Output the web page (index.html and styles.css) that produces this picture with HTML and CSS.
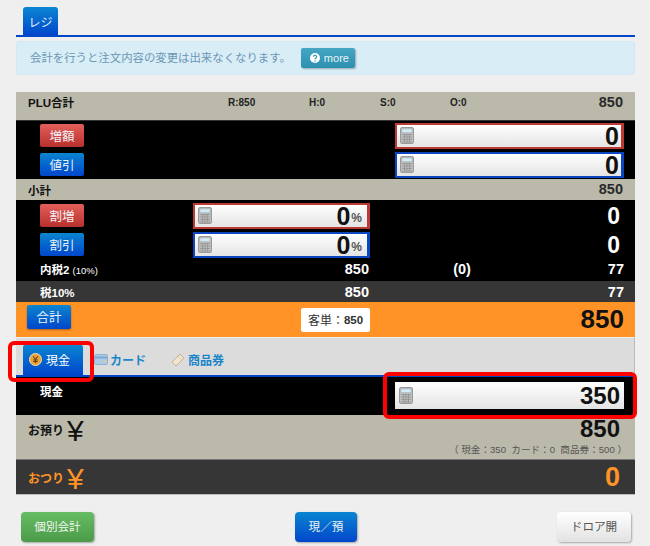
FILE: index.html
```html
<!DOCTYPE html>
<html lang="ja">
<head>
<meta charset="utf-8">
<title>レジ</title>
<link rel="stylesheet" href="styles.css">
</head>
<body>
<svg class="defs" width="0" height="0" aria-hidden="true">
  <symbol id="calc" viewBox="0 0 14 17">
    <rect x="0.5" y="0.5" width="13" height="16" rx="1.5" fill="#bdbdbd" stroke="#9a9a9a"/>
    <rect x="2" y="2" width="10" height="3.5" fill="#d4ecf5" stroke="#9fb4bc" stroke-width="0.5"/>
    <path d="M2 7.5h10M2 10h10M2 12.5h10M2 15h10M4.500 7v8.500M7 7v8.500M9.500 7v8.500" stroke="#8f8f8f" stroke-width="0.7" fill="none"/>
  </symbol>
</svg>
<main class="page">
  <nav class="top-tabs"><span class="top-tab">レジ</span></nav>
  <div class="alert">
    <span class="alert-text">会計を行うと注文内容の変更は出来なくなります。</span>
    <span class="more">
      <svg class="more-icon" viewBox="0 0 10 10" aria-hidden="true"><circle cx="5" cy="5" r="5" fill="#fff"/><path d="M3.400 3.800a1.600 1.600 0 1 1 2.400 1.400c-.5.3-.8.5-.8 1.100" stroke="#2f94b5" stroke-width="1.200" fill="none"/><circle cx="5" cy="8" r=".7" fill="#2f94b5"/></svg>
      more
    </span>
  </div>

  <section class="register">
    <div class="row khaki plu">
      <b class="plu-title">PLU合計</b>
      <span class="stat stat-r">R:850</span>
      <span class="stat stat-h">H:0</span>
      <span class="stat stat-s">S:0</span>
      <span class="stat stat-o">O:0</span>
      <b class="amount-sm">850</b>
    </div>

    <div class="black adj-top">
      <div class="row adj-row">
        <span class="btn-sm red">増額</span>
        <div class="field wide border-red"><svg class="calc"><use href="#calc"/></svg><b>0</b></div>
      </div>
      <div class="row adj-row">
        <span class="btn-sm blue">値引</span>
        <div class="field wide border-blue"><svg class="calc"><use href="#calc"/></svg><b>0</b></div>
      </div>
    </div>

    <div class="row khaki subtotal">
      <b class="sub-title">小計</b>
      <b class="amount-sm">850</b>
    </div>

    <div class="black adj-mid">
      <div class="row rate-row">
        <span class="btn-sm red">割増</span>
        <div class="field narrow border-red"><svg class="calc"><use href="#calc"/></svg><b>0</b><i>%</i></div>
        <b class="white-zero">0</b>
      </div>
      <div class="row rate-row">
        <span class="btn-sm blue">割引</span>
        <div class="field narrow border-blue"><svg class="calc"><use href="#calc"/></svg><b>0</b><i>%</i></div>
        <b class="white-zero">0</b>
      </div>
      <div class="row tax-row">
        <b class="tax-label">内税2 <small>(10%)</small></b>
        <b class="tax-a">850</b>
        <b class="tax-b">(0)</b>
        <b class="tax-c">77</b>
      </div>
    </div>

    <div class="row tax-row dark tax-dark">
      <b class="tax-label">税10%</b>
      <b class="tax-a">850</b>
      <b class="tax-b"></b>
      <b class="tax-c">77</b>
    </div>

    <div class="row total">
      <span class="btn-sm blue raised">合計</span>
      <span class="per">客単：<b>850</b></span>
      <b class="total-amount">850</b>
    </div>

    <div class="pay-tabs">
      <span class="pay-tab active">
        <svg class="coin" viewBox="0 0 14 14" aria-hidden="true"><circle cx="7" cy="7" r="6.500" fill="#e8a33c" stroke="#fbe3b8"/><path d="M4.500 3.500 7 7l2.500-3.500M7 7v4M4.600 7.600h4.800M4.600 9.200h4.800" stroke="#6b4210" stroke-width="1.100" fill="none"/></svg>
        現金
      </span>
      <span class="pay-tab">
        <svg class="tab-icon" viewBox="0 0 14 11" aria-hidden="true"><rect x=".5" y=".5" width="13" height="10" rx="1" fill="#a9cbe8" stroke="#8fb2d2"/><rect x="1" y="2.500" width="12" height="2" fill="#7ea6cc"/><rect x="9" y="6.500" width="3" height="2" fill="#e8c98a"/></svg>
        カード
      </span>
      <span class="pay-tab">
        <svg class="tab-icon ticket" viewBox="0 0 14 14" aria-hidden="true"><path d="M1 9 9 1l4 4-8 8z" fill="#f0e4cd" stroke="#c4b496"/><path d="M7.500 3.500 10.500 6.500" stroke="#c4b496" stroke-dasharray="1 1"/></svg>
        商品券
      </span>
    </div>

    <div class="row black cash">
      <b class="cash-label">現金</b>
      <div class="field wide plain"><svg class="calc"><use href="#calc"/></svg><b>350</b></div>
    </div>

    <div class="khaki deposit">
      <div class="row deposit-main">
        <b class="word">お預り</b>
        <span class="yen">¥</span>
        <b class="big">850</b>
      </div>
      <p class="breakdown">（ 現金：350&nbsp; カード：0&nbsp; 商品券：500 ）</p>
    </div>

    <div class="row dark change">
      <b class="word">おつり</b>
      <span class="yen">¥</span>
      <b class="big">0</b>
    </div>
  </section>

  <footer class="actions">
    <span class="btn green">個別会計</span>
    <span class="btn blue mid">現／預</span>
    <span class="btn light">ドロア開</span>
  </footer>

  <div class="mark mark-tab"></div>
  <div class="mark mark-field"></div>
</main>
</body>
</html>
```
FILE: styles.css
```css
* { box-sizing: border-box; }
html, body { margin: 0; padding: 0; }
body {
  width: 650px;
  height: 546px;
  overflow: hidden;
  background: #efefef;
  font-family: "Liberation Sans", "Noto Sans CJK JP", sans-serif;
  color: #111;
}
.defs { position: absolute; }
.page { position: relative; height: 546px; padding: 7px 15px 0 16px; }

.top-tabs { height: 30px; border-bottom: 2px solid #0046c8; padding-left: 7px; }
.top-tab {
  display: flex; align-items: center; justify-content: center;
  width: 35px; height: 28px;
  border-radius: 3px 3px 0 0;
  background: linear-gradient(#0b86d2, #0046cc);
  color: #e8f3fb; font-size: 12px;
}

.alert {
  display: flex; align-items: center;
  height: 34px; margin-top: 4px; padding-left: 13px;
  background: #d9edf7; border: 1px solid #d2e8f3; border-radius: 3px;
  color: #6b97b5; font-size: 11.400px;
}
.alert-text { margin-bottom: 3px; }
.more {
  display: flex; align-items: center; gap: 4px;
  width: 54px; height: 20px; margin-left: 10px; padding-left: 9px;
  background: linear-gradient(#46a6c4, #2f8fb0);
  border-radius: 2px; box-shadow: 1px 1px 2px rgba(0,0,0,.3);
  color: #e8f4f8; font-size: 11px;
}
.more-icon { width: 10px; height: 10px; }

.register { margin-top: 17px; box-shadow: -1px 0 0 #b9b9ad inset; }
.row { display: flex; align-items: center; position: relative; }
.khaki { background: #bab9aa; }
.black { background: #000; color: #fff; }
.dark { background: #363636; color: #fff; }

.plu { height: 28px; align-items: flex-start; padding-top: 2px; }
.plu-title { margin-left: 12px; width: 200px; font-size: 11.500px; line-height: 18px; }
.stat { font-size: 10px; font-weight: bold; line-height: 17px; color: #222; }
.stat-r { width: 81px; }
.stat-h { width: 71px; }
.stat-s { width: 70px; }
.stat-o { width: 30px; }
.amount-sm { margin-left: auto; margin-right: 12px; font-size: 14.500px; line-height: 17px; color: #2a2a2a; }

.adj-top { height: 59px; border-top: 1px solid #333; }
.adj-row { height: 29px; justify-content: space-between; padding: 0 11px 0 24px; }

.btn-sm {
  display: flex; align-items: center; justify-content: center;
  width: 44px; height: 23px; padding-bottom: 1px; border-radius: 2px;
  color: #eef3f8; font-size: 12.500px;
}
.red { background: linear-gradient(#e2605b, #b8302c); }
.blue { background: linear-gradient(#0b85d0, #0046cc); }

.field {
  display: flex; align-items: center; justify-content: flex-end;
  height: 26px; padding: 0 2px 0 3px;
  background: linear-gradient(#fff, #e4e4e4);
  color: #111;
}
.field b { font-size: 25px; line-height: 22px; }
.field i { font-style: normal; font-weight: bold; font-size: 12px; color: #555; margin: 4px 3px 0 1px; }
.wide { width: 229px; }
.narrow { width: 177px; }
.border-red { border: 3px solid #bd3a34; border-width: 2px 3px 2px 2px; }
.border-blue { border: 3px solid #0b46c2; border-width: 2px 3px 2px 2px; }
.calc { width: 14px; height: 17px; margin-right: auto; }

.subtotal { height: 21px; }
.sub-title { margin-left: 12px; font-size: 11.500px; }

.adj-mid { height: 81px; padding-top: 1px; }
.rate-row { height: 29px; padding: 0 15px 0 24px; }
.rate-row .field { margin-left: 109px; }
.white-zero { margin-left: auto; font-size: 23px; line-height: 22px; }
.tax-row { height: 21px; padding: 0 11px 0 24px; }
.adj-mid .tax-row { height: 20px; }
.tax-label { width: 153px; font-size: 11.500px; }
.tax-label small { font-size: 9.500px; font-weight: normal; }
.tax-a { width: 176px; text-align: right; font-size: 14.500px; }
.tax-b { width: 186px; text-align: center; font-size: 14.500px; }
.tax-c { margin-left: auto; font-size: 14.500px; }
.tax-dark { height: 21px; }

.total { height: 35px; background: #ff9326; padding: 0 11px; }
.raised { align-self: flex-start; margin-top: 3px; height: 24px; box-shadow: 0 1px 2px rgba(0,0,0,.35); }
.per {
  display: flex; align-items: center; justify-content: center;
  width: 69px; height: 24px; margin-left: 230px;
  background: #fff; border-radius: 2px;
  font-size: 12px; color: #333;
}
.per b { font-size: 11.500px; }
.total-amount { margin-left: auto; font-size: 26px; color: #111; }

.pay-tabs {
  display: flex; align-items: flex-end;
  height: 40px; padding-left: 7px;
  background: #dcdcdc;
  border-top: 1px solid #efefef;
  border-right: 1px solid #bbb;
  border-bottom: 2px solid #0046c8;
}
.pay-tab {
  display: flex; align-items: center;
  height: 30px; padding-bottom: 1px;
  color: #1c86c8; font-size: 12px; font-weight: bold;
}
.pay-tab:nth-child(2) { width: 77px; margin-left: 11px; gap: 2px; }
.pay-tab:nth-child(3) { gap: 3px; }
.pay-tab.active {
  width: 60px; gap: 4px; padding-left: 6px;
  border-radius: 2px 2px 0 0;
  background: linear-gradient(#0b85d0, #0046cc);
  color: #fff; font-weight: normal;
}
.coin { width: 13px; height: 13px; }
.tab-icon { width: 14px; height: 11px; }
.tab-icon.ticket { width: 14px; height: 14px; }

.cash { height: 38px; align-items: flex-start; padding-right: 11px; }
.cash-label { margin: 7px 0 0 24px; font-size: 11.500px; line-height: 16px; }
.cash .field { margin: 5px 0 0 auto; height: 27px; padding: 0 4px; }
.cash .field b { font-size: 24px; }

.deposit { height: 45px; border-bottom: 1px solid #777; }
.deposit-main { height: 31px; padding: 0 15px 0 12px; }
.word { font-size: 12px; width: 39px; line-height: 16px; }
.yen { font-size: 30px; line-height: 24px; font-weight: normal; }
.big { margin-left: auto; margin-top: -3px; font-size: 24px; line-height: 24px; }
.deposit-main .big { color: #111; }
.breakdown { margin: -3px 0 0; padding-right: 8px; text-align: right; font-size: 9.600px; line-height: 14px; color: #555; }

.change { height: 35px; padding: 3px 15px 0 12px; color: #ff9326; border-bottom: 1px solid #bbb; }
.change .big { font-size: 27px; }

.actions { display: flex; margin-top: 17px; padding-left: 5px; }
.btn {
  display: flex; align-items: center; justify-content: center;
  height: 30px; padding-bottom: 2px; border-radius: 4px;
  font-size: 11.600px; color: #f0f6f0;
  box-shadow: 1px 1px 2px rgba(0,0,0,.3);
}
.green { width: 73px; background: linear-gradient(#66bd63, #4c9a49); }
.mid { width: 62px; margin-left: 201px; background: linear-gradient(#0b85d0, #0046cc); }
.light { width: 74px; margin-left: 200px; background: linear-gradient(#fff, #e2e2e2); color: #555; }

.mark { position: absolute; border: 4px solid #ff0000; border-radius: 6px; pointer-events: none; }
.mark-tab { left: 8px; top: 341px; width: 86px; height: 41px; }
.mark-field { left: 383px; top: 372px; width: 254px; height: 47px; }
```
